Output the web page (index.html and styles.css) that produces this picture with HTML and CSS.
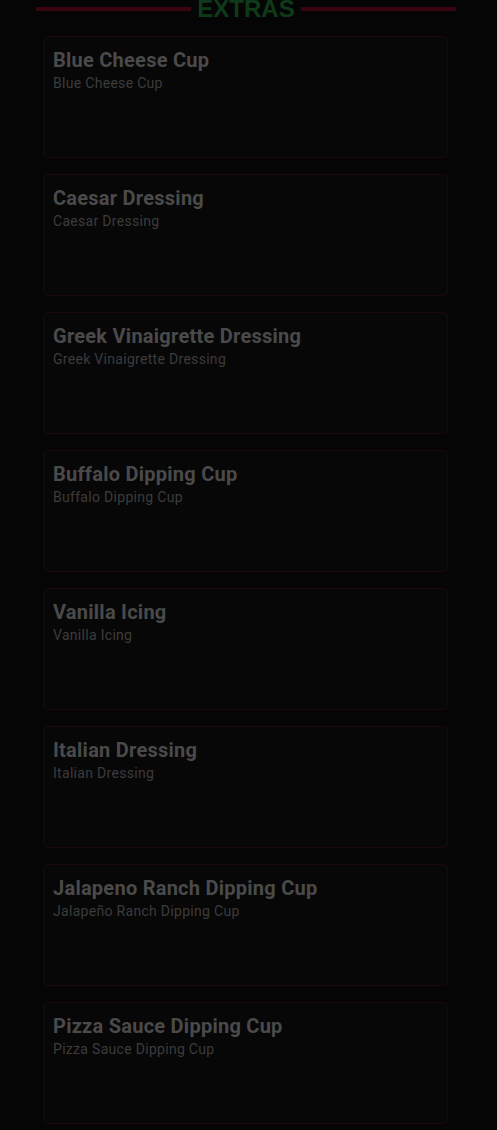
FILE: index.html
```html
<!DOCTYPE html>
<html lang="en">
<head>
    <meta charset="UTF-8">
    <meta name="viewport" content="width=device-width, initial-scale=1.0">
    <title>Extras</title>
    <link rel="stylesheet" href="styles.css">
</head>
<body>

<div class="section">
    <div class="section-head">
        <span class="line"></span>
        <h2>EXTRAS</h2>
        <span class="line"></span>
    </div>

    <div class="items">
        <div class="item">
            <div class="item-name">Blue Cheese Cup</div>
            <div class="item-desc">Blue Cheese Cup</div>
        </div>
        <div class="item">
            <div class="item-name">Caesar Dressing</div>
            <div class="item-desc">Caesar Dressing</div>
        </div>
        <div class="item">
            <div class="item-name">Greek Vinaigrette Dressing</div>
            <div class="item-desc">Greek Vinaigrette Dressing</div>
        </div>
        <div class="item">
            <div class="item-name">Buffalo Dipping Cup</div>
            <div class="item-desc">Buffalo Dipping Cup</div>
        </div>
        <div class="item">
            <div class="item-name">Vanilla Icing</div>
            <div class="item-desc">Vanilla Icing</div>
        </div>
        <div class="item">
            <div class="item-name">Italian Dressing</div>
            <div class="item-desc">Italian Dressing</div>
        </div>
        <div class="item">
            <div class="item-name">Jalapeno Ranch Dipping Cup</div>
            <div class="item-desc">Jalapeño Ranch Dipping Cup</div>
        </div>
        <div class="item">
            <div class="item-name">Pizza Sauce Dipping Cup</div>
            <div class="item-desc">Pizza Sauce Dipping Cup</div>
        </div>
    </div>
</div>

</body>
</html>
```

FILE: styles.css
```css
body {
    margin: 0;
    background: #050505;
    font-family: Roboto, "Liberation Sans", sans-serif;
}
.section {
    padding: 0 41px 0 36px;
    margin-top: -10px;
}
.section-head {
    display: flex;
    align-items: center;
    gap: 6px;
    height: 38px;
}
.section-head h2 {
    margin: 0;
    font-family: "Liberation Sans", Arial, sans-serif;
    font-size: 24px;
    font-weight: bold;
    color: #0f3a1a;
    line-height: 38px;
}
.line {
    flex: 1;
    height: 4px;
    background: #3a0410;
}
.items {
    display: flex;
    flex-direction: column;
    gap: 16px;
    padding: 8px 8px 0 7px;
}
.item {
    height: 122px;
    box-sizing: border-box;
    padding: 10px 9px;
    border: 1px solid #1c080c;
    border-radius: 4px;
    background: #070707;
}
.item-name {
    font-size: 20px;
    font-weight: bold;
    letter-spacing: 0.25px;
    color: #4a4a4a;
    line-height: 26px;
}
.item-desc {
    font-size: 14px;
    letter-spacing: 0.3px;
    color: #3c3c3c;
    line-height: 20px;
}
```
